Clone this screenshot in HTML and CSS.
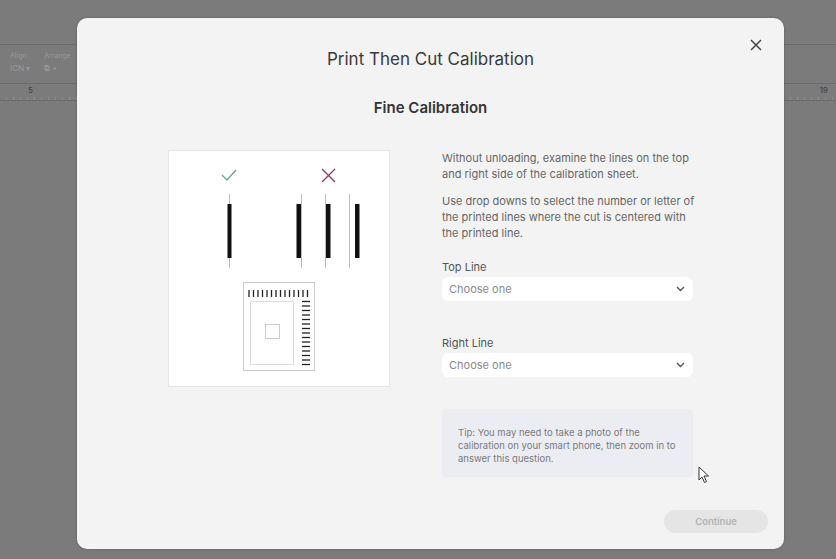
FILE: index.html
```html
<!DOCTYPE html>
<html lang="en">
<head>
  <meta charset="UTF-8" />
  <title>Print Then Cut Calibration</title>
  <link rel="stylesheet" href="styles.css">
</head>
<body>

<div class="app">
  <div class="topbar"></div>
  <div class="toolbar">
    <div class="tool">
      <span class="tool-label">Align</span>
      <span class="tool-icon">ICN ▾</span>
    </div>
    <div class="tool">
      <span class="tool-label">Arrange</span>
      <span class="tool-icon">⧉ ▾</span>
    </div>
  </div>
  <div class="ruler">
    <span class="ruler-num">5</span>
    <span class="ruler-num right">19</span>
  </div>
</div>

<div class="modal">
  <button class="close" aria-label="Close">
    <svg width="12" height="12" viewBox="0 0 12 12"><path d="M1 1 L11 11 M11 1 L1 11" stroke="#444" stroke-width="1.5" fill="none"/></svg>
  </button>
  <h1 class="modal-title">Print Then Cut Calibration</h1>
  <h2 class="modal-sub">Fine Calibration</h2>

  <div class="modal-body">
    <div class="figure">
      <svg width="222" height="237" viewBox="0 0 222 237">
        <!-- good / bad marks -->
        <path d="M54 25 L59 30 L68 20" stroke="#6aa88a" stroke-width="1.4" fill="none"/>
        <path d="M154 19 L167 32 M167 19 L154 32" stroke="#9b3b5a" stroke-width="1.4" fill="none"/>
        <!-- cut lines (thin) -->
        <g stroke="#bbb" stroke-width="1">
          <line x1="61.5" y1="44" x2="61.5" y2="118"/>
          <line x1="133.5" y1="44" x2="133.5" y2="118"/>
          <line x1="157.5" y1="44" x2="157.5" y2="118"/>
          <line x1="181.5" y1="44" x2="181.5" y2="118"/>
        </g>
        <!-- printed lines (thick) -->
        <g fill="#111">
          <rect x="59.5" y="54" width="4" height="54"/>
          <rect x="128.5" y="54" width="4.5" height="54"/>
          <rect x="158" y="54" width="4.5" height="54"/>
          <rect x="187" y="54" width="4.5" height="54"/>
        </g>
        <!-- calibration sheet -->
        <rect x="75.5" y="132.5" width="71" height="88" fill="#fff" stroke="#ccc"/>
        <rect x="82.5" y="151.5" width="43" height="63" fill="none" stroke="#ddd"/>
        <rect x="97.5" y="174.5" width="14" height="14" fill="none" stroke="#ccc"/>
        <g stroke="#222" stroke-width="1.3">
          <line x1="81" y1="140" x2="81" y2="147"/>
          <line x1="85.5" y1="140" x2="85.5" y2="147"/>
          <line x1="90" y1="140" x2="90" y2="147"/>
          <line x1="94.5" y1="140" x2="94.5" y2="147"/>
          <line x1="99" y1="140" x2="99" y2="147"/>
          <line x1="103.5" y1="140" x2="103.5" y2="147"/>
          <line x1="108" y1="140" x2="108" y2="147"/>
          <line x1="112.5" y1="140" x2="112.5" y2="147"/>
          <line x1="117" y1="140" x2="117" y2="147"/>
          <line x1="121.5" y1="140" x2="121.5" y2="147"/>
          <line x1="126" y1="140" x2="126" y2="147"/>
          <line x1="130.5" y1="140" x2="130.5" y2="147"/>
          <line x1="135" y1="140" x2="135" y2="147"/>
          <line x1="139.5" y1="140" x2="139.5" y2="147"/>
          <line x1="134" y1="151.5" x2="142" y2="151.5"/>
          <line x1="134" y1="156" x2="142" y2="156"/>
          <line x1="134" y1="160.5" x2="142" y2="160.5"/>
          <line x1="134" y1="165" x2="142" y2="165"/>
          <line x1="134" y1="169.5" x2="142" y2="169.5"/>
          <line x1="134" y1="174" x2="142" y2="174"/>
          <line x1="134" y1="178.5" x2="142" y2="178.5"/>
          <line x1="134" y1="183" x2="142" y2="183"/>
          <line x1="134" y1="187.5" x2="142" y2="187.5"/>
          <line x1="134" y1="192" x2="142" y2="192"/>
          <line x1="134" y1="196.5" x2="142" y2="196.5"/>
          <line x1="134" y1="201" x2="142" y2="201"/>
          <line x1="134" y1="205.5" x2="142" y2="205.5"/>
          <line x1="134" y1="210" x2="142" y2="210"/>
          <line x1="134" y1="214.5" x2="142" y2="214.5"/>
        </g>
      </svg>
    </div>

    <div class="info">
      <p>Without unloading, examine the lines on the top and right side of the calibration sheet.</p>
      <p>Use drop downs to select the number or letter of the printed lines where the cut is centered with the printed line.</p>

      <label class="field-label">Top Line</label>
      <div class="select">
        <span>Choose one</span>
        <svg width="9" height="6" viewBox="0 0 9 6"><path d="M1 1 L4.5 4.5 L8 1" stroke="#555" stroke-width="1.4" fill="none"/></svg>
      </div>

      <label class="field-label second">Right Line</label>
      <div class="select">
        <span>Choose one</span>
        <svg width="9" height="6" viewBox="0 0 9 6"><path d="M1 1 L4.5 4.5 L8 1" stroke="#555" stroke-width="1.4" fill="none"/></svg>
      </div>

      <div class="tip">
        Tip: You may need to take a photo of the calibration on your smart phone, then zoom in to answer this question.
      </div>
    </div>
  </div>

  <div class="modal-footer">
    <button class="btn-continue" disabled>Continue</button>
  </div>
</div>

<svg class="cursor" width="12" height="18" viewBox="0 0 12 18">
  <path d="M1 1 L1 14 L4 11 L6.5 16.5 L8.5 15.5 L6 10 L10.5 10 Z" fill="#fff" stroke="#333" stroke-width="1"/>
</svg>

</body>
</html>
```

FILE: styles.css
```css
body {
  margin: 0;
  width: 836px;
  height: 559px;
  overflow: hidden;
  background: #7b7b7b;
  font-family: Inter, "Noto Sans", sans-serif;
  position: relative;
}
.app {
  height: 100%;
}
.topbar {
  height: 44px;
  border-bottom: 1px solid #6e6e6e;
}
.toolbar {
  display: flex;
  gap: 14px;
  padding: 6px 0 0 10px;
  height: 32px;
  border-bottom: 1px solid #6c6c6c;
}
.tool {
  display: flex;
  flex-direction: column;
  gap: 3px;
}
.tool-label {
  font-size: 7px;
  color: #9a9a9a;
}
.tool-icon {
  font-size: 8px;
  color: #9a9a9a;
}
.ruler {
  height: 16px;
  border-bottom: 1px solid #6c6c6c;
  display: flex;
  justify-content: space-between;
  padding: 0 8px 0 28px;
  background: repeating-linear-gradient(90deg, transparent 0 6px, #8a8a8a 6px 7px) bottom / 100% 3px no-repeat;
}
.ruler-num {
  font-size: 8px;
  color: #3e3e3e;
  line-height: 12px;
}
.modal {
  position: absolute;
  left: 77px;
  top: 18px;
  width: 707px;
  height: 531px;
  box-sizing: border-box;
  background: #f3f3f3;
  border-radius: 10px;
  box-shadow: 0 0 3px rgba(0,0,0,0.25);
  display: flex;
  flex-direction: column;
}
.close {
  position: absolute;
  top: 21px;
  right: 22px;
  border: none;
  background: none;
  padding: 0;
  width: 12px;
  height: 12px;
}
.modal-title {
  margin: 29px 0 0;
  text-align: center;
  font-size: 17px;
  font-weight: 400;
  color: #3a3a3a;
  line-height: 24px;
}
.modal-sub {
  margin: 27px 0 0;
  text-align: center;
  font-size: 15px;
  font-weight: 600;
  color: #333;
  line-height: 20px;
}
.modal-body {
  display: flex;
  gap: 52px;
  padding: 32px 0 0 91px;
}
.figure {
  width: 222px;
  height: 237px;
  background: #fff;
  border: 1px solid #e4e4e4;
  box-sizing: border-box;
}
.figure svg {
  display: block;
  margin: -1px;
}
.info {
  width: 251px;
  display: flex;
  flex-direction: column;
}
.info p {
  margin: 0 -8px 11px 0;
  font-size: 11px;
  line-height: 16px;
  color: #666;
}
.field-label {
  margin-top: 7px;
  font-size: 11px;
  line-height: 16px;
  color: #555;
}
.field-label.second {
  margin-top: 34px;
}
.select {
  margin-top: 2px;
  height: 24px;
  background: #fff;
  border-radius: 6px;
  display: flex;
  align-items: center;
  justify-content: space-between;
  padding: 0 8px 0 7px;
  font-size: 11px;
  color: #8a8a8a;
}
.tip {
  margin-top: 32px;
  background: #ecedf3;
  border-radius: 3px;
  height: 68px;
  box-sizing: border-box;
  padding: 17px 16px 0;
  font-size: 9.5px;
  line-height: 13px;
  color: #7a7a7a;
}
.modal-footer {
  margin-top: auto;
  display: flex;
  justify-content: flex-end;
  padding: 0 16px 16px 0;
}
.btn-continue {
  width: 104px;
  height: 23px;
  border: none;
  border-radius: 12px;
  background: #e5e5e5;
  color: #b3b3b3;
  font-family: Inter, "Noto Sans", sans-serif;
  font-size: 9.5px;
  font-weight: 600;
}
.cursor {
  position: absolute;
  left: 698px;
  top: 466px;
}
```
